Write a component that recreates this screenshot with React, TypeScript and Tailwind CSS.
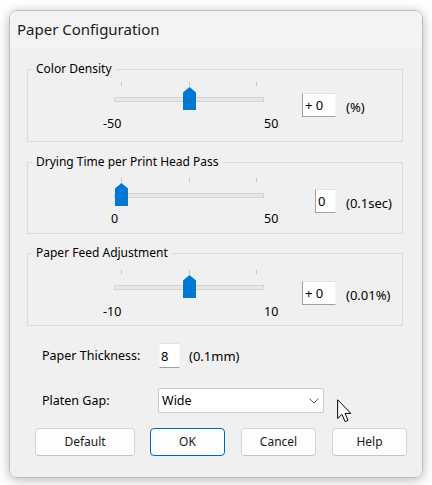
import type { ReactNode } from "react";

const font = { fontFamily: '"Segoe UI", "Noto Sans", sans-serif' };

// Blue pentagon thumb of the trackbar
function Thumb() {
  return (
    <svg width="13" height="23" viewBox="0 0 13 23">
      <path d="M6.5 0 L13 5.5 V23 H0 V5.5 Z" fill="#0078d4" />
    </svg>
  );
}

function Slider({ thumbLeft }: { thumbLeft: number }) {
  return (
    <div className="relative w-[150px] h-[28px]">
      {/* ticks */}
      <div className="flex justify-between px-[7px] h-[4px]">
        <div className="w-px h-[4px] bg-[#c6c6c6]" />
        <div className="w-px h-[4px] bg-[#c6c6c6]" />
        <div className="w-px h-[4px] bg-[#c6c6c6]" />
      </div>
      {/* track */}
      <div className="mt-[11px] h-[5px] bg-[#e7e7e7] border border-[#d4d4d4]" />
      <div className="absolute top-[5px]" style={{ left: thumbLeft }}>
        <Thumb />
      </div>
    </div>
  );
}

function NumBox({ value, wide }: { value: string; wide?: boolean }) {
  return (
    <div
      className={`${wide ? "w-[34px]" : "w-[21px]"} h-[24px] bg-white border border-t-[#e3e3e3] border-l-[#a0a0a0] border-b-[#a0a0a0] border-r-[#f4f4f4] pl-[2px] flex items-center text-[13px] leading-[16px]`}
    >
      {value}
    </div>
  );
}

function Group({
  title,
  pt,
  pb,
  children,
  className,
}: {
  title: string;
  pt: string;
  pb: string;
  children: ReactNode;
  className?: string;
}) {
  return (
    <fieldset
      className={`ml-[17px] w-[376px] border border-[#dcdcdc] ${pt} ${pb} ${className ?? ""}`}
    >
      <legend className="ml-[5px] px-[3px] text-[12px] leading-[16px]">{title}</legend>
      {children}
    </fieldset>
  );
}

function SliderRow({
  thumbLeft,
  min,
  max,
  minShift,
  labelGap,
  value,
  wide,
  unit,
}: {
  thumbLeft: number;
  min: string;
  max: string;
  minShift: string;
  labelGap: string;
  value: string;
  wide: boolean;
  unit: string;
}) {
  return (
    <div className="flex items-start">
      <div className="ml-[86px] w-[150px] shrink-0 flex flex-col">
        <Slider thumbLeft={thumbLeft} />
        <div className={`flex w-[190px] whitespace-nowrap text-[12.5px] leading-[16px] ${labelGap} ${minShift}`}>
          <span className={min === "0" ? "w-[153px]" : "w-[161px]"}>{min}</span>
          <span>{max}</span>
        </div>
      </div>
      <div className="ml-[38px] mt-[11px] flex items-start">
        <div className="w-[34px] flex justify-end">
          <NumBox value={value} wide={wide} />
        </div>
        <span className="ml-[10px] mt-[6px] text-[13px] leading-[16px]">{unit}</span>
      </div>
    </div>
  );
}

function Btn({ label, primary, w }: { label: string; primary?: boolean; w: string }) {
  return (
    <button
      className={`${w} h-[28px] rounded-[4px] bg-[#fdfdfd] border text-[12px] leading-[16px] text-[#1a1a1a] ${
        primary ? "border-[#0067c0]" : "border-[#d3d3d3] border-b-[#c4c4c4]"
      }`}
    >
      {label}
    </button>
  );
}

export default function App() {
  return (
    <div className="w-[432px] h-[485px] bg-white pt-[10px] pl-[9px] text-black" style={font}>
      <div className="relative w-[414px] rounded-[8px] border border-[#bcbcbc] overflow-hidden shadow-[0_2px_12px_rgba(0,0,0,0.28)]">
        {/* title bar */}
        <div className="h-[37px] bg-[#f3f3f3] flex items-center pl-[7px] text-[15px] text-[#1b1b1b]">
          Paper Configuration
        </div>

        <div className="bg-[#f0f0f0] pt-[13px] pb-[21px]">
          <Group title="Color Density" pt="pt-[5px]" pb="pb-[9px]">
            <SliderRow
              thumbLeft={69}
              min="-50"
              max="50"
              minShift="-ml-[11px]"
              labelGap="mt-[6px]"
              value="+ 0"
              wide
              unit="(%)"
            />
          </Group>

          <Group title="Drying Time per Print Head Pass" pt="pt-[8px]" pb="pb-[6px]" className="mt-[12px]">
            <SliderRow
              thumbLeft={1}
              min="0"
              max="50"
              minShift="-ml-[3px]"
              labelGap="mt-[5px]"
              value="0"
              wide={false}
              unit="(0.1sec)"
            />
          </Group>

          <Group title="Paper Feed Adjustment" pt="pt-[9px]" pb="pb-[5px]" className="mt-[11px]">
            <SliderRow
              thumbLeft={69}
              min="-10"
              max="10"
              minShift="-ml-[11px]"
              labelGap="mt-[6px]"
              value="+ 0"
              wide
              unit="(0.01%)"
            />
          </Group>

          {/* paper thickness */}
          <div className="mt-[17px] pl-[32px] flex items-center text-[12px] leading-[16px]">
            <span className="w-[117px] text-[12.5px]">Paper Thickness:</span>
            <div className="w-[21px] h-[25px] bg-white border border-t-[#e3e3e3] border-l-[#f4f4f4] border-b-[#a0a0a0] border-r-[#f4f4f4] pl-[1px] flex items-center text-[13px]">
              8
            </div>
            <span className="ml-[9px] text-[13px]">(0.1mm)</span>
          </div>

          {/* platen gap */}
          <div className="mt-[20px] pl-[32px] flex items-center text-[12.5px] leading-[16px]">
            <span className="w-[116px]">Platen Gap:</span>
            <div className="w-[166px] h-[25px] bg-white border border-[#cbcbcb] rounded-[2px] pl-[3px] pr-[4px] flex items-center justify-between">
              <span>Wide</span>
              <svg width="10" height="6" viewBox="0 0 10 6">
                <path d="M0.5 0.5 L5 5 L9.5 0.5" fill="none" stroke="#5f5f5f" strokeWidth="1" />
              </svg>
            </div>
          </div>

          {/* buttons */}
          <div className="mt-[15px] pl-[25px] flex">
            <Btn label="Default" w="w-[100px]" />
            <div className="ml-[15px]">
              <Btn label="OK" primary w="w-[75px]" />
            </div>
            <div className="ml-[16px]">
              <Btn label="Cancel" w="w-[75px]" />
            </div>
            <div className="ml-[16px]">
              <Btn label="Help" w="w-[75px]" />
            </div>
          </div>
        </div>

        {/* mouse pointer */}
        <svg
          className="absolute left-[327px] top-[388px]"
          width="15"
          height="24"
          viewBox="0 0 12 19"
        >
          <path
            d="M0.5 0.5 L0.5 15.5 L4 12.2 L6.5 18 L8.8 17 L6.4 11.4 L11 11.4 Z"
            fill="white"
            stroke="black"
            strokeWidth="0.8"
            strokeLinejoin="miter"
          />
        </svg>
      </div>
    </div>
  );
}
